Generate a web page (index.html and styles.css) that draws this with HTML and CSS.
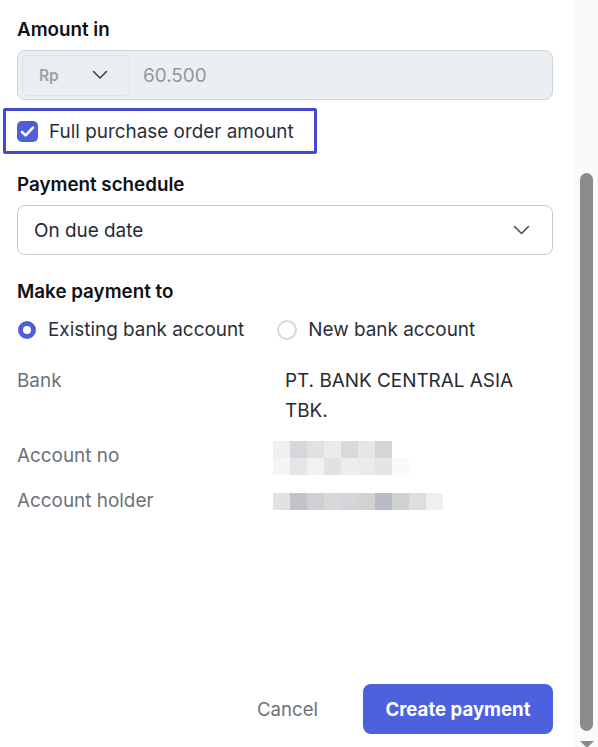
FILE: index.html
```html
<!DOCTYPE html>
<html>
<head>
<meta charset="utf-8">
<link rel="stylesheet" href="styles.css">
</head>
<body>
<div class="page">
  <main class="form">
    <div class="label first">Amount in</div>
    <div class="amount">
      <div class="currency">
        <span class="cur-text">Rp</span>
        <svg class="chev" width="16" height="10" viewBox="0 0 16 10"><path d="M1.5 1.5 L8 8 L14.5 1.5" fill="none" stroke="#3a3f4a" stroke-width="1.6" stroke-linecap="round" stroke-linejoin="round"/></svg>
      </div>
      <span class="amount-val">60.500</span>
    </div>
    <div class="full">
      <span class="check">
        <svg width="15" height="13" viewBox="0 0 15 13"><path d="M2 7 L5.6 10.4 L13 2.6" fill="none" stroke="#fff" stroke-width="2.6" stroke-linecap="round" stroke-linejoin="round"/></svg>
      </span>
      <span class="full-text">Full purchase order amount</span>
    </div>
    <div class="label sched">Payment schedule</div>
    <div class="select">
      <span>On due date</span>
      <svg class="chev" width="17" height="10" viewBox="0 0 17 10"><path d="M1.5 1.5 L8.5 8.5 L15.5 1.5" fill="none" stroke="#4a4f5a" stroke-width="1.6" stroke-linecap="round" stroke-linejoin="round"/></svg>
    </div>
    <div class="label pay">Make payment to</div>
    <div class="radios">
      <label class="radio"><span class="dot on"></span>Existing bank account</label>
      <label class="radio"><span class="dot"></span>New bank account</label>
    </div>
    <div class="rows">
      <div class="row">
        <span class="key">Bank</span>
        <span class="val">PT. BANK CENTRAL ASIA<br>TBK.</span>
      </div>
      <div class="row acc">
        <span class="key">Account no</span>
        <span class="val blur">
          <span class="bl">
            <i style="background:#f0f0f1"></i><i style="background:#d6d7da"></i><i style="background:#e0e1e3"></i><i style="background:#ebebec"></i><i style="background:#d8d9dd"></i><i style="background:#e6e6e8"></i><i style="background:#d4d5d8"></i>
          </span>
          <span class="bl">
            <i style="background:#f5f5f6"></i><i style="background:#e4e5e7"></i><i style="background:#f0f1f1"></i><i style="background:#e2e2e3"></i><i style="background:#ededee"></i><i style="background:#ebebec"></i><i style="background:#e4e4e6"></i><i style="background:#fafafa"></i>
          </span>
        </span>
      </div>
      <div class="row">
        <span class="key">Account holder</span>
        <span class="val blur">
          <span class="bl">
            <i style="background:#e2e2e3"></i><i style="background:#c2c3c6"></i><i style="background:#cfd0d4"></i><i style="background:#d8d8da"></i><i style="background:#d4d5d8"></i><i style="background:#d4d2d0"></i><i style="background:#b9bcc6"></i><i style="background:#cfd0d4"></i><i style="background:#dededf"></i><i style="background:#eff0f2"></i>
          </span>
        </span>
      </div>
    </div>
    <div class="footer">
      <button class="cancel">Cancel</button>
      <button class="create">Create payment</button>
    </div>
  </main>
  <div class="scroll">
    <div class="thumb"></div>
    <div class="arrow"></div>
  </div>
</div>
</body>
</html>
```
FILE: styles.css
```css
html, body {
  margin: 0;
  padding: 0;
  background: #ffffff;
}
body {
  font-family: Inter, "Noto Sans", "Liberation Sans", sans-serif;
  color: #262a33;
}
.page {
  display: flex;
  width: 598px;
  height: 747px;
  overflow: hidden;
}
.form {
  width: 575px;
  box-sizing: border-box;
  padding: 0 22px 13px 17px;
  display: flex;
  flex-direction: column;
}
.label {
  font-size: 18.8px;
  font-weight: 600;
  line-height: 24px;
  color: #0f1115;
}
.label.first { margin-top: 18px; }
.amount {
  margin-top: 8px;
  height: 50px;
  box-sizing: border-box;
  border: 1px solid #d0d5dd;
  border-radius: 8px;
  background: #eceff2;
  display: flex;
  align-items: center;
  padding: 0 4px;
}
.currency {
  width: 108px;
  height: 41px;
  box-sizing: border-box;
  border: 1px solid #dde1e6;
  border-radius: 6px;
  display: flex;
  align-items: center;
  justify-content: space-between;
  padding: 0 21px 0 16px;
}
.cur-text {
  font-size: 15.5px;
  font-weight: 600;
  color: #9aa2ae;
}
.amount-val {
  margin-left: 13px;
  font-size: 18.9px;
  color: #8f96a2;
}
.full {
  margin-top: 8px;
  margin-left: -14px;
  width: 314px;
  height: 46px;
  box-sizing: border-box;
  border: 3px solid #4349cf;
  border-radius: 2px;
  display: flex;
  align-items: center;
  padding-left: 11px;
}
.check {
  width: 21px;
  height: 21px;
  border-radius: 5px;
  background: #4f5fd9;
  display: flex;
  align-items: center;
  justify-content: center;
}
.full-text {
  margin-left: 11px;
  font-size: 18.9px;
  color: #2a2e38;
}
.label.sched { margin-top: 19px; }
.select {
  margin-top: 8px;
  height: 50px;
  box-sizing: border-box;
  border: 1px solid #c6cbd3;
  border-radius: 8px;
  display: flex;
  align-items: center;
  justify-content: space-between;
  padding: 0 22px 0 16px;
  font-size: 18.9px;
  color: #262a33;
}
.label.pay { margin-top: 25px; }
.radios {
  margin-top: 14px;
  display: flex;
  gap: 33px;
  line-height: 24px;
}
.radio {
  display: flex;
  align-items: center;
  gap: 11px;
  font-size: 18.9px;
  color: #2a2e38;
}
.dot {
  width: 20px;
  height: 20px;
  box-sizing: border-box;
  border-radius: 50%;
  border: 2px solid #d3d7de;
  background: #fff;
}
.dot.on {
  width: 18px;
  height: 18px;
  margin: 0 1px 0 1px;
  border: 5.5px solid #4f5fd9;
}
.rows {
  margin-top: 24px;
  display: flex;
  flex-direction: column;
  gap: 13px;
}
.row {
  display: flex;
  font-size: 18.9px;
  line-height: 30px;
}
.row.acc {
  margin-top: 2px;
  margin-bottom: -2px;
}
.key {
  width: 256px;
  color: #6b717c;
}
.val {
  color: #262a33;
  padding-left: 12px;
}
.blur {
  padding-left: 0;
  display: flex;
  flex-direction: column;
  justify-content: center;
}
.bl {
  display: flex;
}
.bl i {
  width: 17px;
  height: 17px;
  display: block;
}
.footer {
  margin-top: auto;
  display: flex;
  justify-content: flex-end;
  align-items: center;
  gap: 45px;
}
button {
  font-family: inherit;
  border: none;
  cursor: pointer;
}
.cancel {
  background: transparent;
  font-size: 18.6px;
  color: #6b717c;
  padding: 0;
}
.create {
  width: 190px;
  height: 50px;
  border-radius: 8px;
  background: #4b61dd;
  color: #fff;
  font-size: 18.6px;
  font-weight: 700;
}
.scroll {
  width: 23px;
  background: #fafafa;
  position: relative;
}
.thumb {
  position: absolute;
  left: 5px;
  top: 173px;
  width: 13px;
  height: 558px;
  border-radius: 7px;
  background: #8c8c8c;
}
.arrow {
  position: absolute;
  left: 5px;
  top: 741px;
  width: 0;
  height: 0;
  border-left: 7px solid transparent;
  border-right: 7px solid transparent;
  border-top: 7px solid #8c8c8c;
}
```
